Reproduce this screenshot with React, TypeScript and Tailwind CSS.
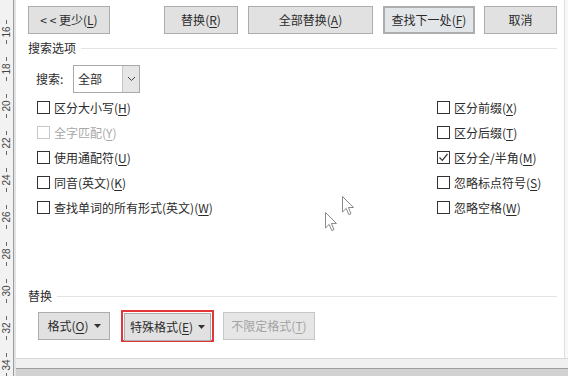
import type { ReactNode } from "react";

const rulerMarks = ["16", "18", "20", "22", "24", "26", "28", "30", "32", "34"];

const Key = ({ k }: { k: string }) => (
  <>
    (<span className="underline underline-offset-2">{k}</span>)
  </>
);

const Btn = ({ children, className = "" }: { children: ReactNode; className?: string }) => (
  <div
    className={`h-[28px] flex items-center justify-center border border-[#adadad] bg-[#e1e1e1] text-[12px] text-[#2b2b2b] ${className}`}
  >
    {children}
  </div>
);

const Caret = () => (
  <svg width="7" height="4" viewBox="0 0 7 4">
    <path d="M0 0 L7 0 L3.5 4 Z" fill="#333" />
  </svg>
);

const Check = ({ label, k, checked = false, disabled = false }: { label: string; k: string; checked?: boolean; disabled?: boolean }) => (
  <div className="h-[25px] flex items-center">
    <div
      className={`w-[13px] h-[13px] border bg-white flex items-center justify-center ${disabled ? "border-[#c8c8c8]" : "border-[#333]"}`}
    >
      {checked && (
        <svg width="11" height="11" viewBox="0 0 11 11">
          <path d="M1.5 5.5 L4.3 8.3 L9.5 2" fill="none" stroke="#333" strokeWidth="1.2" />
        </svg>
      )}
    </div>
    <span className={`ml-[4px] text-[12px] leading-[14px] ${disabled ? "text-[#a8a8a8]" : "text-[#2b2b2b]"}`}>
      {label}
      <Key k={k} />
    </span>
  </div>
);

const Section = ({ title }: { title: string }) => (
  <div className="h-[14px] flex items-center">
    <span className="text-[12px] leading-[14px] text-[#2b2b2b]">{title}</span>
    <div className="flex-1 h-px bg-[#e3e3e3] ml-[5px]" />
  </div>
);

const Cursor = ({ className }: { className: string }) => (
  <svg className={`absolute ${className}`} width="13" height="21" viewBox="0 0 13 21">
    <path
      d="M0.5 0.5 L0.5 16 L4.2 12.4 L6.8 18.6 L9 17.6 L6.4 11.5 L11.5 11.5 Z"
      fill="#fff"
      stroke="#8a8a8a"
      strokeWidth="1"
      strokeLinejoin="round"
    />
  </svg>
);

export default function App() {
  return (
    <div className="relative w-[568px] h-[376px] flex bg-white font-['Noto_Sans_CJK_SC','Noto_Sans',sans-serif] overflow-hidden">
      {/* vertical ruler */}
      <div className="w-[14px] h-full bg-[#f2f2f2] border-r border-[#9c9c9c] flex flex-col pt-[13px]">
        {rulerMarks.map((m) => (
          <div key={m} className="h-[37px] shrink-0 flex flex-col items-center justify-center gap-[3px]">
            <div className="w-px h-[4px] bg-[#666]" />
            <span className="-rotate-90 text-[10px] leading-[10px] text-[#444] font-['Liberation_Sans',sans-serif]">{m}</span>
            <div className="w-px h-[4px] bg-[#666]" />
          </div>
        ))}
      </div>
      <div className="w-[2px] h-full bg-[#e3e3e3]" />

      <div className="flex-1 flex flex-col">
        <div className="h-[358px] flex">
          {/* dialog */}
          <div className="w-[548px] flex flex-col pl-[12px] pr-[7px]">
            <div className="mt-[6px] flex">
              <Btn className="w-[82px]">
                &lt; &lt; 更少<Key k="L" />
              </Btn>
              <Btn className="w-[74px] ml-[54px]">
                替换<Key k="R" />
              </Btn>
              <Btn className="w-[125px] ml-[10px]">
                全部替换<Key k="A" />
              </Btn>
              <Btn className="w-[92px] ml-[10px] border-2 border-[#0a64ad] bg-[#e3e6e9]">
                查找下一处<Key k="F" />
              </Btn>
              <Btn className="w-[73px] ml-[9px]">取消</Btn>
            </div>

            <div className="mt-[7px]">
              <Section title="搜索选项" />
            </div>

            <div className="mt-[10px] pl-[8px] flex items-center">
              <span className="w-[37px] text-[12px] text-[#2b2b2b]">搜索:</span>
              <div className="w-[67px] h-[28px] border border-[#a9a9a9] flex">
                <span className="flex-1 pl-[4px] flex items-center text-[12px] text-[#2b2b2b]">全部</span>
                <div className="w-[17px] border-l border-[#c4c4c4] bg-[#e6e6e6] flex items-center justify-center">
                  <svg width="9" height="6" viewBox="0 0 9 6">
                    <path d="M1 1 L4.5 4.5 L8 1" fill="none" stroke="#444" strokeWidth="1" />
                  </svg>
                </div>
              </div>
            </div>

            <div className="mt-[2px] flex">
              <div className="w-[409px] pl-[9px] flex flex-col">
                <Check label="区分大小写" k="H" />
                <Check label="全字匹配" k="Y" disabled />
                <Check label="使用通配符" k="U" />
                <Check label="同音(英文)" k="K" />
                <Check label="查找单词的所有形式(英文)" k="W" />
              </div>
              <div className="flex flex-col">
                <Check label="区分前缀" k="X" />
                <Check label="区分后缀" k="T" />
                <Check label="区分全/半角" k="M" checked />
                <Check label="忽略标点符号" k="S" />
                <Check label="忽略空格" k="W" />
              </div>
            </div>

            <div className="flex-1" />

            <Section title="替换" />

            <div className="mt-[9px] mb-[18px] h-[28px] flex items-center pl-[10px]">
              <Btn className="w-[72px] gap-[5px]">
                <span>
                  格式<Key k="O" />
                </span>
                <Caret />
              </Btn>
              <div className="ml-[11px] w-[93px] h-[32px] border-2 border-[#e2363a] p-px flex">
                <Btn className="flex-1 h-[28px] gap-[5px]">
                  <span>
                    特殊格式<Key k="E" />
                  </span>
                  <Caret />
                </Btn>
              </div>
              <Btn className="w-[92px] ml-[9px] border-[#c6c6c6] bg-[#e6e6e6] text-[#a3a3a3]">
                不限定格式<Key k="T" />
              </Btn>
            </div>
          </div>
          <div className="w-px bg-[#dedede]" />
          <div className="flex-1 bg-[#f7f7f7]" />
        </div>
        <div className="h-[10px] bg-[#f0f0f0] border-t border-[#d9d9d9]" />
        <div className="flex-1 bg-[#d2d2d2] border-t border-[#9e9e9e]" />
      </div>

      <Cursor className="left-[325px] top-[212px]" />
      <Cursor className="left-[342px] top-[196px]" />
    </div>
  );
}
